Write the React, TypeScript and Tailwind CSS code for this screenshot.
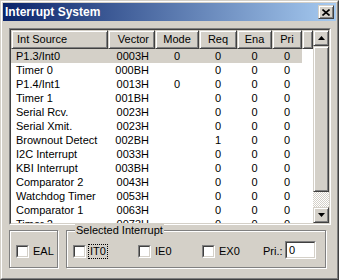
import React from 'react';

type Row = { src: string; vec: string; mode: string; req: string; ena: string; pri: string };

const ROWS: Row[] = [
  { src: 'P1.3/Int0', vec: '0003H', mode: '0', req: '0', ena: '0', pri: '0' },
  { src: 'Timer 0', vec: '000BH', mode: '', req: '0', ena: '0', pri: '0' },
  { src: 'P1.4/Int1', vec: '0013H', mode: '0', req: '0', ena: '0', pri: '0' },
  { src: 'Timer 1', vec: '001BH', mode: '', req: '0', ena: '0', pri: '0' },
  { src: 'Serial Rcv.', vec: '0023H', mode: '', req: '0', ena: '0', pri: '0' },
  { src: 'Serial Xmit.', vec: '0023H', mode: '', req: '0', ena: '0', pri: '0' },
  { src: 'Brownout Detect', vec: '002BH', mode: '', req: '1', ena: '0', pri: '0' },
  { src: 'I2C Interrupt', vec: '0033H', mode: '', req: '0', ena: '0', pri: '0' },
  { src: 'KBI Interrupt', vec: '003BH', mode: '', req: '0', ena: '0', pri: '0' },
  { src: 'Comparator 2', vec: '0043H', mode: '', req: '0', ena: '0', pri: '0' },
  { src: 'Watchdog Timer', vec: '0053H', mode: '', req: '0', ena: '0', pri: '0' },
  { src: 'Comparator 1', vec: '0063H', mode: '', req: '0', ena: '0', pri: '0' },
  { src: 'Timer 2', vec: '0073H', mode: '', req: '0', ena: '0', pri: '0' },
];

const COLS = 'grid grid-cols-[97px_47px_44px_38px_35px_30px]';
const RAISED =
  'bg-[#d4d0c8] border border-t-[#d4d0c8] border-l-[#d4d0c8] border-r-[#404040] border-b-[#404040] shadow-[inset_1px_1px_0_#fff,inset_-1px_-1px_0_#808080]';
const SUNKEN_OUT = 'border border-t-[#808080] border-l-[#808080] border-r-white border-b-white';
const SUNKEN_IN = 'border border-t-[#404040] border-l-[#404040] border-r-[#d4d0c8] border-b-[#d4d0c8]';
const ETCHED = 'relative border border-[#808080] shadow-[inset_1px_1px_0_#fff,1px_1px_0_#fff]';

const Check = () => (
  <span className={`block w-[13px] h-[13px] shrink-0 ${SUNKEN_OUT}`}>
    <span className={`block w-full h-full bg-white ${SUNKEN_IN}`} />
  </span>
);

const Arrow = ({ up }: { up?: boolean }) => (
  <svg width="7" height="4" viewBox="0 0 7 4">
    <path d={up ? 'M3.5 0 L7 4 L0 4 Z' : 'M0 0 L7 0 L3.5 4 Z'} fill="#000" />
  </svg>
);

export default function App() {
  return (
    <div className="w-[339px] h-[280px] bg-[#d4d0c8] border border-t-[#d4d0c8] border-l-[#d4d0c8] border-r-[#404040] border-b-[#404040] font-['Liberation_Sans',Arial,sans-serif] text-[11px] text-black select-none">
      <div className="h-full flex flex-col border border-t-white border-l-white border-r-[#808080] border-b-[#808080] p-px">
        {/* Title bar */}
        <div className="h-[18px] shrink-0 flex items-center justify-between bg-[linear-gradient(to_right,#0a246a,#a6caf0)] pl-[2px] pr-[2px]">
          <span className="text-white font-bold text-[12px] leading-none">Interrupt System</span>
          <button className={`w-[16px] h-[14px] flex items-center justify-center ${RAISED}`}>
            <svg width="8" height="7" viewBox="0 0 8 7">
              <path d="M0.5 0.5 L7.5 6.5 M7.5 0.5 L0.5 6.5" stroke="#000" strokeWidth="1.6" />
            </svg>
          </button>
        </div>

        {/* Client */}
        <div className="flex-1 flex flex-col pt-[7px] pl-[6px] pr-[5px]">
          {/* List view */}
          <div className={`h-[197px] shrink-0 ${SUNKEN_OUT}`}>
            <div className={`h-full flex bg-white ${SUNKEN_IN}`}>
              <div className="flex-1 overflow-hidden">
                <div className="flex h-[19px]">
                  <div className={`${COLS} h-full`}>
                    <div className={`${RAISED} pl-[5px] leading-[17px]`}>Int Source</div>
                    <div className={`${RAISED} text-right pr-[5px] leading-[17px]`}>Vector</div>
                    <div className={`${RAISED} text-center leading-[17px]`}>Mode</div>
                    <div className={`${RAISED} text-center leading-[17px]`}>Req</div>
                    <div className={`${RAISED} text-center leading-[17px]`}>Ena</div>
                    <div className={`${RAISED} text-center leading-[17px]`}>Pri</div>
                  </div>
                  <div className={`flex-1 ${RAISED}`} />
                </div>
                {ROWS.map((r, i) => (
                  <div key={r.src} className={`${COLS} w-[291px] h-[14px] leading-[14px] ${i === 0 ? 'bg-[#d4d0c8]' : ''}`}>
                    <div className="pl-[5px] whitespace-nowrap">{r.src}</div>
                    <div className="text-right pr-[6px]">{r.vec}</div>
                    <div className="text-center">{r.mode}</div>
                    <div className="text-center">{r.req}</div>
                    <div className="text-center">{r.ena}</div>
                    <div className="text-center">{r.pri}</div>
                  </div>
                ))}
              </div>
              {/* Scrollbar */}
              <div className="w-[16px] shrink-0 flex flex-col">
                <div className={`h-[16px] shrink-0 flex items-center justify-center ${RAISED}`}>
                  <Arrow up />
                </div>
                <div className={`h-[146px] shrink-0 ${RAISED}`} />
                <div className="flex-1 bg-[repeating-conic-gradient(#d4d0c8_0_25%,#ffffff_0_50%)] bg-[length:2px_2px]" />
                <div className={`h-[16px] shrink-0 flex items-center justify-center ${RAISED}`}>
                  <Arrow />
                </div>
              </div>
            </div>
          </div>

          {/* Bottom group boxes */}
          <div className="flex mt-[5px]">
            <div className={`${ETCHED} w-[49px] h-[38px] flex items-center pl-[6px] pt-[4px]`}>
              <Check />
              <span className="ml-[4px]">EAL</span>
            </div>
            <div className={`${ETCHED} ml-[8px] w-[260px] h-[38px] flex items-center pl-[6px] pt-[4px]`}>
              <span className="absolute -top-[8px] left-[8px] px-[1px] bg-[#d4d0c8] leading-[14px]">Selected Interrupt</span>
              <div className="w-[65px] flex items-center">
                <Check />
                <span className="ml-[2px] px-[1px] border border-dotted border-black leading-[13px]">IT0</span>
              </div>
              <div className="w-[64px] flex items-center">
                <Check />
                <span className="ml-[2px] px-[1px] border border-transparent leading-[13px]">IE0</span>
              </div>
              <div className="w-[61px] flex items-center">
                <Check />
                <span className="ml-[2px] px-[1px] border border-transparent leading-[13px]">EX0</span>
              </div>
              <span className="w-[22px]">Pri.:</span>
              <div className={`w-[31px] h-[18px] -mt-[3px] ${SUNKEN_OUT}`}>
                <div className={`h-full bg-white pl-[2px] leading-[14px] ${SUNKEN_IN}`}>0</div>
              </div>
            </div>
          </div>
        </div>
      </div>
    </div>
  );
}
